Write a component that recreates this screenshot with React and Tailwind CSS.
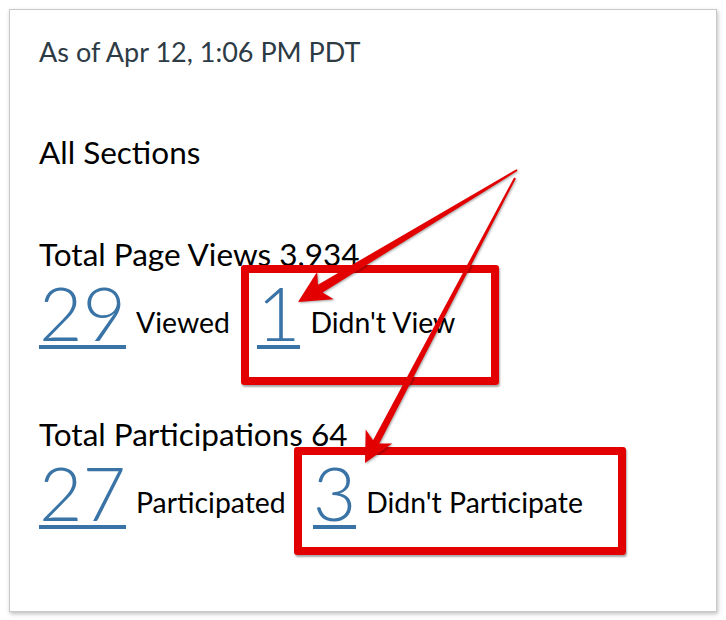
const Stat = ({ value, label, className = "" }) => (
  <div className={`flex items-end gap-[10px] ${className}`}>
    <span className="inline-block border-b-4 border-[#3a74a6] text-[75px] font-light leading-[0.853] text-[#3a74a6]">
      {value}
    </span>
    <span className="mb-[10px] text-[28.4px] leading-[1.2] text-black">{label}</span>
  </div>
);

const Arrows = () => (
  <svg
    className="pointer-events-none absolute left-0 top-0 drop-shadow-[1px_1px_1px_rgba(0,0,0,0.35)]"
    width="726"
    height="620"
    viewBox="0 0 726 620"
  >
    <polygon
      fill="#e20000"
      points="516.48,169.14 317.95,284.73 317.15,271.78 298,302 333.67,299.18 322.59,292.43 517.52,170.86"
    />
    <polygon
      fill="#e20000"
      points="514.11,177.53 373.08,440.13 365.69,429.46 365,463 392.25,443.44 379.28,443.39 515.89,178.47"
    />
  </svg>
);

const App = () => {
  return (
    <div className="relative h-[620px] w-[726px] overflow-hidden bg-white p-[9px] font-['Lato','Liberation_Sans',sans-serif]">
      <div className="h-[603px] w-[708px] border border-[#c9c9c9] bg-white pl-[29px] pt-[26.3px] shadow-[1px_2px_4px_rgba(0,0,0,0.25)]">
        <p className="text-[27px] leading-[1.2] text-[#2d3b45]">As of Apr 12, 1:06 PM PDT</p>
        <h2 className="mt-[65.1px] text-[31.5px] leading-[1.2] text-black">All Sections</h2>

        <h3 className="mt-[64.2px] text-[31.5px] leading-[1.2] text-black">Total Page Views 3,934</h3>
        <div className="mt-[7.3px] flex items-end gap-[27px]">
          <Stat value="29" label="Viewed" />
          <Stat value="1" label="Didn't View" />
        </div>

        <h3 className="mt-[66.9px] text-[31.5px] leading-[1.2] text-black">Total Participations 64</h3>
        <div className="mt-[7.3px] flex items-end gap-[27px]">
          <Stat value="27" label="Participated" />
          <Stat value="3" label="Didn't Participate" />
        </div>
      </div>

      {/* annotation boxes */}
      <div className="absolute left-[241px] top-[265px] h-[120px] w-[258px] rounded-[3px] border-8 border-[#e20000] shadow-[1px_2px_2px_rgba(0,0,0,0.35)]" />
      <div className="absolute left-[294px] top-[447px] h-[108px] w-[332px] rounded-[3px] border-8 border-[#e20000] shadow-[1px_2px_2px_rgba(0,0,0,0.35)]" />

      <Arrows />
    </div>
  );
};

export default App;
